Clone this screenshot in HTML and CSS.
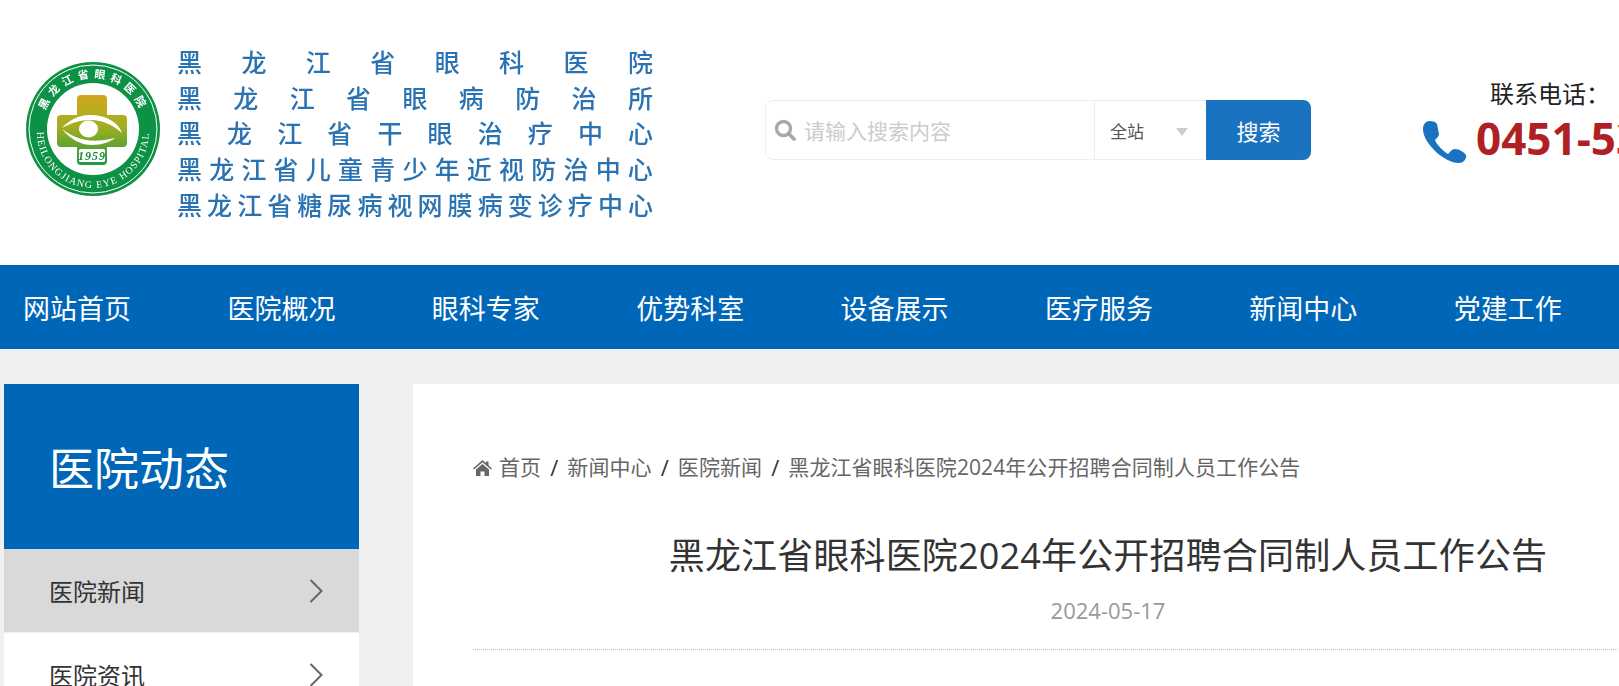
FILE: index.html
```html
<!DOCTYPE html>
<html lang="zh-CN">
<head>
<meta charset="utf-8">
<title>黑龙江省眼科医院</title>
<link rel="stylesheet" href="styles.css">
</head>
<body>
<div class="page">
  <header class="header">
    <svg class="logo" viewBox="0 0 134 134" aria-label="黑龙江省眼科医院">
      <defs>
        <linearGradient id="crossFill" x1="0.5" y1="0" x2="0.5" y2="1">
          <stop offset="0" stop-color="#cfa81f"/>
          <stop offset="0.45" stop-color="#a3ae20"/>
          <stop offset="1" stop-color="#1f9a42"/>
        </linearGradient>
        <path id="arcTop" d="M 19.4 48.7 A 51 51 0 0 1 114.6 48.7"/>
        <path id="arcBottom" d="M 11 70 A 56 56 0 0 0 123 70"/>
      </defs>
      <circle cx="67" cy="67" r="67" fill="#0d9245"/>
      <circle cx="67" cy="67" r="64" fill="none" stroke="#fff" stroke-width="1"/>
      <circle cx="67" cy="67" r="46" fill="#fff"/>
      <text class="logo-cn"><textPath href="#arcTop" textLength="120">黑龙江省眼科医院</textPath></text>
      <text class="logo-en"><textPath href="#arcBottom" textLength="174">HEILONGJIANG EYE HOSPITAL</textPath></text>
      <path fill="url(#crossFill)" d="M51 37 a4 4 0 0 1 4-4 h22 a4 4 0 0 1 4 4 v16 h16 a4 4 0 0 1 4 4 v24 a4 4 0 0 1-4 4 h-16 v14 a4 4 0 0 1-4 4 h-22 a4 4 0 0 1-4-4 v-14 h-16 a4 4 0 0 1-4-4 v-24 a4 4 0 0 1 4-4 h16 z"/>
      <path fill="#fff" d="M36 66 C44 57 54 53 64 53 C80 53 92 60 96 71 C88 64 78 58 64 58 C54 58 45 61 36 66 Z"/>
      <path fill="#fff" d="M36 67 C46 79 56 83 66 83 C76 83 84 80 89 76 C80 78 72 79 64 78.500 C54 78 44 73 36 67 Z"/>
      <ellipse cx="62.500" cy="67" rx="9.500" ry="8.500" fill="#fff"/>
      <rect x="53" y="87" width="26" height="13" rx="1.500" fill="#fff"/>
      <text class="logo-year" x="66" y="98" text-anchor="middle">1959</text>
    </svg>
    <div class="brand">
      <div class="brand-line"><span>黑</span><span>龙</span><span>江</span><span>省</span><span>眼</span><span>科</span><span>医</span><span>院</span></div>
      <div class="brand-line"><span>黑</span><span>龙</span><span>江</span><span>省</span><span>眼</span><span>病</span><span>防</span><span>治</span><span>所</span></div>
      <div class="brand-line"><span>黑</span><span>龙</span><span>江</span><span>省</span><span>干</span><span>眼</span><span>治</span><span>疗</span><span>中</span><span>心</span></div>
      <div class="brand-line"><span>黑</span><span>龙</span><span>江</span><span>省</span><span>儿</span><span>童</span><span>青</span><span>少</span><span>年</span><span>近</span><span>视</span><span>防</span><span>治</span><span>中</span><span>心</span></div>
      <div class="brand-line"><span>黑</span><span>龙</span><span>江</span><span>省</span><span>糖</span><span>尿</span><span>病</span><span>视</span><span>网</span><span>膜</span><span>病</span><span>变</span><span>诊</span><span>疗</span><span>中</span><span>心</span></div>
    </div>
    <form class="search">
      <svg class="search-icon" viewBox="0 0 22 22"><circle cx="9.500" cy="9.500" r="7" fill="none" stroke="#a9a9a9" stroke-width="3.400"/><path d="M14.500 14.500 L20 20" stroke="#a9a9a9" stroke-width="3.800" stroke-linecap="round"/></svg>
      <span class="search-placeholder">请输入搜索内容</span>
      <div class="search-scope"><span>全站</span><i class="scope-arrow"></i></div>
      <button class="search-btn" type="button">搜索</button>
    </form>
    <div class="contact">
      <div class="contact-label">联系电话：</div>
      <div class="contact-phone">
        <svg class="phone-icon" viewBox="0 0 44 42"><path fill="#1a73c0" d="M0 8 C0 3 3 0 7 0 C10 0 13 1 14 3 L16 13 C16 15 14 17 12 19 C14 24 20 30 25 33 C27 31 29 28 32 28 C36 28 41 31 43 34 C44 37 41 42 36 42 C28 42 20 37 13 31 C6 24 0 16 0 8 Z"/></svg>
        <span class="phone-number">0451-53650000</span>
      </div>
    </div>
  </header>

  <nav class="nav">
    <a href="#">网站首页</a>
    <a href="#">医院概况</a>
    <a href="#">眼科专家</a>
    <a href="#">优势科室</a>
    <a href="#">设备展示</a>
    <a href="#">医疗服务</a>
    <a href="#">新闻中心</a>
    <a href="#">党建工作</a>
  </nav>

  <main class="main">
    <aside class="side">
      <h2 class="side-title">医院动态</h2>
      <ul class="side-list">
        <li class="side-item active"><span>医院新闻</span><svg class="chev" viewBox="0 0 14 24"><path d="M1.500 1 L12.500 12 L1.500 23" fill="none" stroke="#666" stroke-width="2"/></svg></li>
        <li class="side-item"><span>医院资讯</span><svg class="chev" viewBox="0 0 14 24"><path d="M1.500 1 L12.500 12 L1.500 23" fill="none" stroke="#666" stroke-width="2"/></svg></li>
      </ul>
    </aside>
    <section class="panel">
      <div class="crumbs">
        <svg class="home" viewBox="0 0 19 16"><path fill="#666" d="M9.500 0 L13 3 V1.500 H15.500 V5.200 L19 8.400 L18 9.600 L9.500 2.200 L1 9.600 L0 8.400 Z M3 9.500 L9.500 4 L16 9.500 V16 H11.500 V11.500 H7.500 V16 H3 Z"/></svg>
        <a href="#">首页</a><i>/</i><a href="#">新闻中心</a><i>/</i><a href="#">医院新闻</a><i>/</i><a href="#">黑龙江省眼科医院2024年公开招聘合同制人员工作公告</a>
      </div>
      <h1 class="article-title">黑龙江省眼科医院2024年公开招聘合同制人员工作公告</h1>
      <div class="article-date">2024-05-17</div>
      <div class="rule"></div>
    </section>
  </main>
</div>
</body>
</html>
```

FILE: styles.css
```css
* { box-sizing: border-box; }
html, body { margin: 0; padding: 0; height: 100%; overflow: hidden; background: #fff; }
body { font-family: "Open Sans", "Noto Sans CJK SC", sans-serif; color: #333; }
a { color: inherit; text-decoration: none; }
h1, h2, ul { margin: 0; padding: 0; font-weight: 400; }
li { list-style: none; }

.page { width: 1810px; }

.header { height: 265px; display: flex; align-items: flex-start; padding-left: 26px; }
.logo { width: 134px; height: 134px; margin-top: 62px; flex: none; filter: blur(.4px); }
.logo-cn { font: 700 11px "Noto Sans CJK SC", sans-serif; fill: #fff; }
.logo-en { font: 400 10px "Liberation Serif", serif; fill: #fff; }
.logo-year { font: italic 700 12px "Liberation Serif", serif; fill: #178a3e; letter-spacing: 1px; }

.brand { width: 476px; margin: 43px 0 0 17px; flex: none; filter: blur(.4px); }
.brand-line { height: 35.700px; display: flex; justify-content: space-between; align-items: center; font: 500 25px/36px "Noto Sans CJK SC", sans-serif; color: #2a73b3; }

.search { width: 546px; height: 60px; margin: 100px 0 0 112px; flex: none; display: flex; align-items: center; border: 1px solid #eee; border-radius: 8px; }
.search-icon { width: 22px; height: 22px; margin-left: 8px; flex: none; }
.search-placeholder { width: 298px; padding-left: 8px; font-size: 21px; color: #ccc; flex: none; }
.search-scope { width: 112px; height: 100%; flex: none; border-left: 1px solid #eee; display: flex; align-items: center; padding-left: 15px; font-size: 17px; color: #555; }
.scope-arrow { margin-left: 32px; margin-top: 3px; border: 6.500px solid transparent; border-top: 8px solid #ccc; border-bottom: 0; }
.search-btn { flex: 1; height: 60px; margin: -1px -1px -1px 0; border: 0; border-radius: 0 8px 8px 0; background: #1a73c0; color: #fff; font: 22px "Noto Sans CJK SC", sans-serif; }

.contact { margin: 78px 0 0 112px; width: 280px; flex: none; }
.contact-label { padding-left: 67px; font-size: 24px; line-height: 32px; color: #222; white-space: nowrap; }
.contact-phone { display: flex; align-items: flex-start; margin-top: 11px; }
.phone-icon { width: 44px; height: 42px; flex: none; }
.phone-number { margin: -4px 0 0 9px; font-size: 44px; line-height: 42px; font-weight: 700; color: #b01f24; white-space: nowrap; }

.nav { height: 84px; background: #0066b8; display: flex; align-items: center; gap: 96.400px; padding-left: 23px; }
.nav a { width: 108px; font-size: 27px; color: #fff; white-space: nowrap; flex: none; }

.main { background: #f0f0f0; display: flex; gap: 54px; padding: 35px 0 0 4px; height: 400px; }
.side { width: 355px; flex: none; }
.side-title { height: 165px; background: #0066b8; color: #fff; font-size: 45px; line-height: 170px; padding-left: 45px; }
.side-list { display: flex; flex-direction: column; gap: 1px; }
.side-item { height: 83px; background: #fff; display: flex; align-items: center; justify-content: space-between; padding: 0 36px 0 45px; font-size: 24px; color: #333; }
.side-item.active { background: #d9d9d9; }
.chev { width: 14px; height: 24px; flex: none; }

.panel { flex: 1; background: #fff; padding: 64px 67px 0 60px; }
.crumbs { display: flex; align-items: center; font-size: 21px; line-height: 38px; color: #666; white-space: nowrap; letter-spacing: .08px; }
.home { width: 19px; height: 16px; margin: 1px 7px 0 0; flex: none; }
.crumbs i { font-style: normal; font-size: 22px; margin: 0 9px; color: #333; }
.article-title { margin-top: 45px; text-align: center; font-size: 36px; line-height: 50px; color: #333; letter-spacing: .16px; }
.article-date { margin-top: 14px; text-align: center; font-size: 22px; line-height: 30px; color: #999; }
.rule { margin-top: 24px; margin-right: -67px; border-top: 1px dotted #bbb; }
```
